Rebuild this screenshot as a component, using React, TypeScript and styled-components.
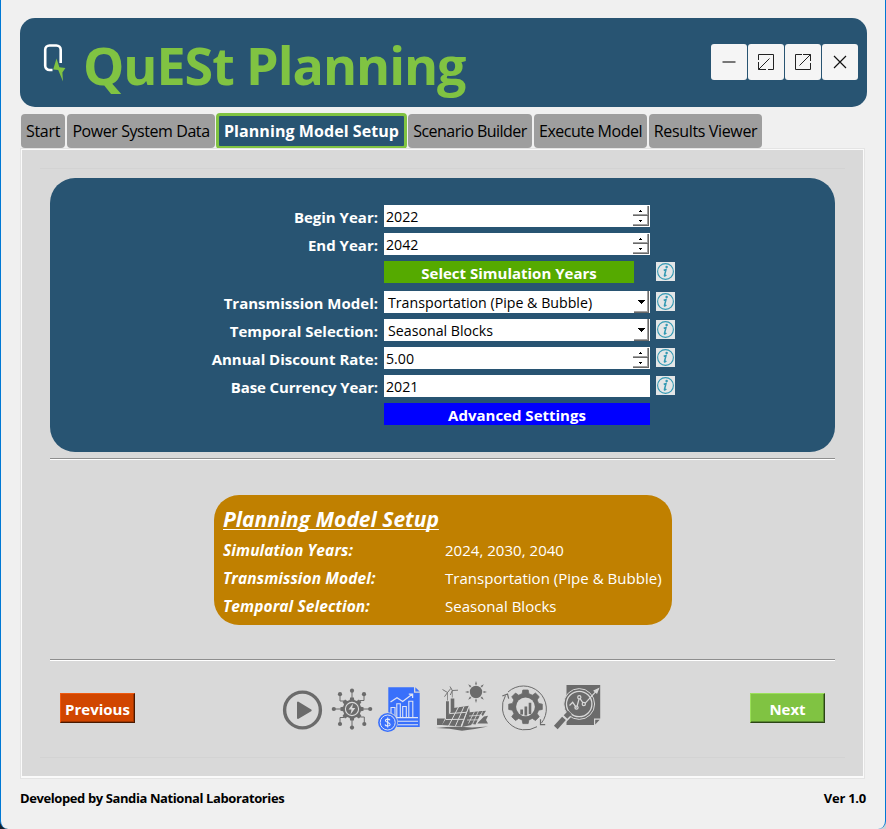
import React from 'react';
import styled, { createGlobalStyle } from 'styled-components';

const navy = '#285472';
const lime = '#80c342';
const iconGrey = '#6b6b6b';
const paper = '#d9d9d9';

const GlobalStyle = createGlobalStyle`
  * { box-sizing: border-box; }
  body {
    margin: 0;
    background: linear-gradient(90deg, #17222b 50%, #cfd3d6 50%);
    font-family: 'Open Sans', 'Noto Sans', sans-serif;
    color: #000;
  }
  button { font-family: inherit; }
`;

const Window = styled.div`
  width: 886px;
  height: 829px;
  padding: 18px 18px 0 19px;
  display: flex;
  flex-direction: column;
  background: #f0f0f0;
  border: 1px solid #0078d4;
  border-width: 0 1px 0 1px;
  border-radius: 0 0 8px 8px;
  overflow: hidden;
`;

const Header = styled.header`
  display: flex;
  align-items: center;
  flex: none;
  height: 89px;
  padding: 0 9px 0 23px;
  background: ${navy};
  border-radius: 15px;
`;

const Title = styled.h1`
  flex: 1;
  margin: 4px 0 0 16px;
  font-size: 52px;
  line-height: 70px;
  font-weight: 700;
  letter-spacing: -1.05px;
  white-space: nowrap;
  color: ${lime};
`;

const WindowControls = styled.div`
  display: flex;
  gap: 1px;
  margin-bottom: 1px;
`;

const ControlButton = styled.button`
  display: flex;
  align-items: center;
  justify-content: center;
  width: 36px;
  height: 36px;
  padding: 0;
  border: 0;
  border-radius: 3px;
  background: #f5f5f5;
`;

const TabBar = styled.nav`
  display: flex;
  align-items: center;
  flex: none;
  height: 36px;
  margin-top: 6px;
  padding-left: 1px;
`;

const Tab = styled.button<{ $width: number; $spacing: number; $active?: boolean }>`
  flex: none;
  width: ${(p) => p.$width}px;
  height: ${(p) => (p.$active ? 36 : 34)}px;
  margin-right: ${(p) => (p.$active ? 1 : 2)}px;
  margin-left: ${(p) => (p.$active ? -1 : 0)}px;
  padding: 0;
  border: ${(p) => (p.$active ? `3px solid ${lime}` : '0')};
  border-radius: 4px;
  background: ${(p) => (p.$active ? navy : '#9e9e9e')};
  color: ${(p) => (p.$active ? '#fff' : '#000')};
  font-size: 16px;
  font-weight: ${(p) => (p.$active ? 700 : 400)};
  letter-spacing: ${(p) => p.$spacing}px;
  line-height: 22px;
  white-space: nowrap;
`;

const Pane = styled.main`
  flex: none;
  width: 843px;
  height: 629px;
  margin-left: 1px;
  padding: 18px 18px 0;
  display: flex;
  flex-direction: column;
  background: ${paper};
  border: 1px solid #fafafa;
  border-bottom-width: 2px;
  outline: 1px solid #e4e4e4;
`;

const PaneBody = styled.div`
  display: flex;
  flex-direction: column;
  height: 590px;
  padding: 9px 10px 0;
  border: 1px solid #d3d3d3;
  border-width: 1px 0;
`;

const FormPanel = styled.section`
  flex: none;
  height: 274px;
  margin-bottom: 6px;
  padding: 27px 0 0 150px;
  background: ${navy};
  border-radius: 25px;
`;

const FormGrid = styled.div`
  display: grid;
  grid-template-columns: 178px 266px 19px;
  grid-template-rows: 22px 22px 24px repeat(5, 22px);
  column-gap: 6px;
  row-gap: 6px;
`;

const Label = styled.label<{ $spacing?: number }>`
  grid-column: 1;
  padding-top: 1px;
  text-align: right;
  font-size: 15px;
  font-weight: 700;
  letter-spacing: ${(p) => p.$spacing ?? 0}px;
  line-height: 22px;
  color: #fff;
  white-space: nowrap;
`;

const Field = styled.div<{ $indent?: number }>`
  grid-column: 2;
  display: flex;
  justify-content: space-between;
  height: 22px;
  padding: 0 1px 0 ${(p) => p.$indent ?? 2}px;
  background: #fff;
  font-size: 14.2px;
  line-height: 23px;
  white-space: nowrap;
`;

const ActionButton = styled.button<{ $color: string; $width: number }>`
  grid-column: 2;
  width: ${(p) => p.$width}px;
  height: 22px;
  padding: 2px 0 0;
  border: 0;
  background: ${(p) => p.$color};
  color: #fff;
  font-size: 15px;
  font-weight: 700;
  line-height: 20px;
`;

const InfoButton = styled.span`
  grid-column: 3;
  display: block;
  width: 19px;
  height: 19px;
  margin-top: 1px;
  background: #e4e6e7;
`;

const SpinColumn = styled.div`
  display: flex;
  flex-direction: column;
  padding-top: 1px;
`;

const SpinButton = styled.span`
  display: flex;
  align-items: center;
  justify-content: center;
  width: 16px;
  height: 10px;
  background: #fff;
  border: solid #696969;
  border-width: 0 1px 1px 0;
  box-shadow: inset -1px -1px #a0a0a0;
`;

const DropButton = styled.span`
  display: flex;
  align-items: center;
  justify-content: center;
  width: 15px;
  height: 22px;
  border: solid #696969;
  border-width: 0 1px 1px 0;
  box-shadow: inset -1px -1px #a0a0a0;
`;

const Rule = styled.hr`
  flex: none;
  width: 100%;
  height: 2px;
  margin: 0;
  border: 0;
  border-top: 1px solid #8e8e8e;
  background: #fff;
`;

const Summary = styled.section`
  flex: none;
  align-self: flex-start;
  width: 458px;
  height: 130px;
  margin: 35px 0 34px 164px;
  padding: 8px 9px 0;
  background: #c08000;
  border-radius: 25px;
  color: #fff;
`;

const SummaryTitle = styled.h2`
  margin: 0;
  font-size: 21px;
  font-style: italic;
  font-weight: 700;
  line-height: 33px;
  text-decoration: underline;
  text-decoration-thickness: 1px;
  text-underline-offset: 2px;
  text-decoration-skip-ink: none;
`;

const SummaryRow = styled.div`
  display: grid;
  grid-template-columns: 222px 1fr;
  font-size: 15px;
  letter-spacing: 0.03px;
  line-height: 28px;
  white-space: nowrap;
`;

const SummaryLabel = styled.span`
  font-size: 15.5px;
  font-style: italic;
  font-weight: 700;
  letter-spacing: 0.1px;
`;

const NavRow = styled.div`
  display: flex;
  flex: none;
  justify-content: space-between;
  align-items: flex-start;
  height: 74px;
  padding: 18px 10px 0;
`;

const NavButton = styled.button<{ $color: string; $light: string; $shade: string; $dark: string }>`
  width: 75px;
  height: 30px;
  margin-top: 14px;
  padding: 1px 0 0;
  border: 1px solid;
  border-color: ${(p) => `${p.$light} ${p.$dark} ${p.$dark} ${p.$light}`};
  box-shadow: inset -1px -1px ${(p) => p.$shade};
  background: ${(p) => p.$color};
  color: #fff;
  font-size: 15px;
  font-weight: 700;
  line-height: 22px;
`;

const StepIcons = styled.div`
  display: flex;
  margin-right: -1px;
`;

const Footer = styled.footer`
  display: flex;
  justify-content: space-between;
  margin-top: 9px;
  padding-right: 1px;
  font-size: 13px;
  font-weight: 700;
  line-height: 22px;
  letter-spacing: -0.4px;
`;

const FooterVersion = styled.span`
  letter-spacing: -0.25px;
`;

function gearPath(cx: number, cy: number, outer: number, inner: number, teeth = 8) {
  const points: string[] = [];
  const step = (Math.PI * 2) / teeth;
  const add = (r: number, a: number) =>
    points.push(`${(cx + r * Math.sin(a)).toFixed(2)},${(cy - r * Math.cos(a)).toFixed(2)}`);
  for (let i = 0; i < teeth; i++) {
    const a = i * step;
    add(inner, a - step * 0.32);
    add(outer, a - step * 0.2);
    add(outer, a + step * 0.2);
    add(inner, a + step * 0.32);
  }
  return `M${points.join('L')}Z`;
}

const Logo = () => (
  <svg width="24" height="42" viewBox="43 44 24 42" fill="none">
    <path d="M52.5 72h-3a4.300 4.300 0 0 1-4.300-4.300V51.800a4.300 4.300 0 0 1 4.300-4.300h6.900a4.300 4.300 0 0 1 4.300 4.300V65" stroke="#fff" strokeWidth="2.600" />
    <path d="M56.500 60.500l-3.300 11 5 .5 4.800 11.500-.6-9 3-4.500-6-.8z" fill={lime} />
  </svg>
);

const Minimize = () => (
  <svg width="14" height="2" viewBox="0 0 14 2"><path d="M.5 1h13" stroke="#777" strokeWidth="2" /></svg>
);
const Restore = () => (
  <svg width="16" height="16" viewBox="0 0 16 16" fill="none" stroke="#222">
    <path d="M.5 6V.5h15v15H10M.5 8v7.500H8M.5 15.500l11-11" />
  </svg>
);
const Maximize = () => (
  <svg width="16" height="16" viewBox="0 0 16 16" fill="none" stroke="#222">
    <path d="M7 .5H.5v15h15V9M8 .5h7.500V7M15.500.5L4.500 11.500" />
  </svg>
);
const Close = () => (
  <svg width="14" height="14" viewBox="0 0 14 14"><path d="M1 1l12 12M13 1L1 13" stroke="#111" strokeWidth="1.200" /></svg>
);

const Info = () => (
  <InfoButton>
    <svg width="19" height="19" viewBox="0 0 19 19" fill="none">
      <circle cx="9.500" cy="9.500" r="7.900" stroke="#3399b3" strokeWidth="1.100" />
      <circle cx="10.600" cy="5.100" r="1.250" fill="#3399b3" />
      <path d="M7.700 8.200l2.300-.6-1.500 5.700c-.2.900.4.900 1.900-.3" stroke="#3399b3" strokeWidth="1.500" />
    </svg>
  </InfoButton>
);

const Spinner = () => (
  <SpinColumn>
    <SpinButton><svg width="3" height="2"><path d="M1 0h1v1h1v1H0V1h1z" /></svg></SpinButton>
    <SpinButton><svg width="3" height="2"><path d="M0 0h3v1H2v1H1V1H0z" /></svg></SpinButton>
  </SpinColumn>
);

const DropArrow = () => (
  <DropButton><svg width="7" height="4"><path d="M0 0h7v1H6v1H5v1H4v1H3V3H2V2H1V1H0z" /></svg></DropButton>
);

const PlayIcon = () => (
  <svg width="47" height="56" viewBox="280 679 47 56">
    <circle cx="302.500" cy="710" r="17.900" fill="none" stroke={iconGrey} strokeWidth="3.400" />
    <path d="M298 702.500v15.500l12.700-7.700z" fill={iconGrey} stroke={iconGrey} strokeWidth="2" strokeLinejoin="round" />
  </svg>
);

const networkNodes = [
  [352, 690.7], [352, 727.600], [333.800, 709], [370.200, 709],
  [340, 694.200], [364, 694.200], [340, 724], [364.300, 724],
];

const NetworkIcon = () => (
  <svg width="49" height="56" viewBox="327 679 49 56">
    <path d="M352 691v8M352 719v8M334 709h8M362 709h8M340 694v7h4M364 694v6.500h-4M340 724v-6.500h4M364.300 724v-7h-4" fill="none" stroke={iconGrey} strokeWidth="1" />
    {networkNodes.map(([x, y]) => <circle key={`${x}-${y}`} cx={x} cy={y} r="2.100" fill={iconGrey} />)}
    <path d={gearPath(352, 709, 11.700, 9.200)} fill={iconGrey} />
    <circle cx="352" cy="709" r="6.600" fill={iconGrey} stroke={paper} strokeWidth="1.100" />
    <path d="M353 703.500l-4.500 6h3l-1 5 4.800-6.500h-3.100z" fill={paper} />
  </svg>
);

const ReportIcon = () => (
  <svg width="54" height="56" viewBox="376 679 54 56">
    <path d="M388.300 687.300H414v5.400h5.700V727h-31.400z" fill="#3970fb" />
    <path d="M415.300 687.300l4.400 4.200h-4.400z" fill="#3970fb" />
    <g fill="none" stroke="#dfe4f5" strokeWidth="1.100">
      <path d="M390.500 702l6.500-4.200 5.700 3.700 9.500-7.200M408.800 694.200h3.800v3.700" strokeWidth="1.300" />
      <path d="M391 717v-9.500h4V717M396.800 717v-13.300h3.500V717M402.700 717v-10.500h3.600V717M408.800 717v-15.800h4V717" />
      <path d="M390 717.600h28M398 721.300h20M398 724.800h20" />
    </g>
    <circle cx="387.700" cy="722.500" r="10.200" fill={paper} />
    <circle cx="387.700" cy="722.500" r="9.600" fill="#3970fb" />
    <circle cx="387.700" cy="722.500" r="7.500" fill="none" stroke="#dfe4f5" />
    <path d="M390 720.200c-.5-1.300-4.400-1.600-4.600.4-.1 2 4.700 1.500 4.700 3.800 0 2.200-4.600 2-5.100.1M387.700 717.500v10" fill="none" stroke="#e8ecf8" strokeWidth="1.100" />
  </svg>
);

const sunRays = [0, 45, 90, 135, 180, 225, 270, 315];

const SolarIcon = () => (
  <svg width="65" height="56" viewBox="430 679 65 56">
    <circle cx="476" cy="692" r="6.200" fill={iconGrey} />
    {sunRays.map((angle) => (
      <path key={angle} d="M475 684.500l1-3.500 1 3.500z" fill={iconGrey} transform={`rotate(${angle} 476 692)`} />
    ))}
    <g fill="none" stroke={iconGrey}>
      <path d="M447.500 692.500v8M452.300 690.500v7" strokeWidth=".7" />
      <path d="M447.500 692.500l-5-3M447.500 692.500l3.300-4M447.500 692.500l-3 4.200M452.300 690.500l-2.300-4M452.300 690.500l5.700-.3M452.300 690.500l-2 4.500" strokeWidth=".9" />
    </g>
    <path d="M446 701.200h2.900V719H446zM450.700 698.500h3.600V712h-3.600zM437 718.500h8l-3 6.500h-5z" fill={iconGrey} />
    <path d="M453.500 708l15.300-2.200-8 20.700-19-1.500zM469 706.500l2.500 18.500-9.500 2z" fill={iconGrey} />
    <path d="M470 712.200l12-1.200-6.500 13.500-9.800-1.500zM478 711.600l8-.8-3.200 5.200M484 716.500l4-.8-2 4.300 2 3.500h-11z" fill={iconGrey} />
    <g fill="none" stroke={paper} strokeWidth="1">
      <path d="M450 713.500l16.500-1.200M446 719.500l17.500-.2M458.500 707l-10 19M464 706.500l-9 20.500M469 706.500l-8 20" />
      <path d="M469 716l12-.8M467 720l11.800-.2M474.500 711.500l-6 12M478.500 711l-6 13.200M482.500 711.500l-6 13" strokeWidth=".8" />
    </g>
    <path d="M436 728q18-2.300 36-.6l16-.9q-12 2.600-26 4.300-12-2.500-26-2.800z" fill={iconGrey} />
  </svg>
);

const ProcessIcon = () => (
  <svg width="56" height="56" viewBox="494.500 679.500 56 56">
    <g fill="none" stroke={iconGrey} strokeWidth="1">
      <path d="M507.500 692.500A22.900 22.900 0 0 1 541 723.500M536.500 727.200A22.900 22.900 0 0 1 505 696" />
      <path d="M501.800 696.500l5.200-2 1.200 4.600M540 719.800v5.300h4.700" strokeWidth="1.200" />
    </g>
    <path d={gearPath(525, 707.300, 17.000, 13.500)} fill={iconGrey} stroke={iconGrey} strokeWidth=".8" strokeLinejoin="round" />
    <circle cx="525" cy="707.300" r="9.400" fill={paper} />
    <path d="M519.800 710h2.700v5h-2.700zM524 707h2.700v9H524zM528.200 703.200h2.600V714.500h-2.600z" fill={iconGrey} />
  </svg>
);

const AnalysisIcon = () => (
  <svg width="55" height="56" viewBox="551.500 679 55 56">
    <path d="M567 685h33.700v33.500h-6.200v6.500H567z" fill={iconGrey} />
    <path d="M595.700 719.800h4.500l-4.500 4.600z" fill={iconGrey} />
    <path d="M571 713l-14.500 15" stroke={paper} strokeWidth="6.500" />
    <circle cx="579.700" cy="704" r="15.400" fill={iconGrey} stroke={paper} strokeWidth="1" />
    <circle cx="579.700" cy="704" r="12.700" fill="none" stroke={paper} strokeWidth="1.300" />
    <path d="M570.500 712.500l-4.500 4.500M564.500 718.300l-8.200 9.200" stroke={iconGrey} strokeWidth="5" />
    <g fill="none" stroke={paper} strokeWidth="1.200">
      <path d="M570 705.500l3.200-3.200 3.800 5.500M577.500 706.500l2-7.500M580.600 698.700l3 4.500M585.500 703.300l11.500-12.500" />
      <circle cx="577" cy="707.600" r="1.600" /><circle cx="579.800" cy="697.300" r="1.600" /><circle cx="584.300" cy="704" r="1.600" />
      <path d="M594.700 690.800l4.300-2-1.700 4.300z" fill={paper} />
    </g>
  </svg>
);

const tabs = [
  { name: 'Start', width: 44, spacing: -0.3 },
  { name: 'Power System Data', width: 148, spacing: -0.43 },
  { name: 'Planning Model Setup', width: 191, spacing: 0.07, active: true },
  { name: 'Scenario Builder', width: 124, spacing: -0.52 },
  { name: 'Execute Model', width: 113, spacing: -0.5 },
  { name: 'Results Viewer', width: 113, spacing: -0.35 },
];

const summary = [
  ['Simulation Years:', '2024, 2030, 2040'],
  ['Transmission Model:', 'Transportation (Pipe & Bubble)'],
  ['Temporal Selection:', 'Seasonal Blocks'],
];

export default function App() {
  return (
    <>
      <GlobalStyle />
      <Window>
        <Header>
          <Logo />
          <Title>QuESt Planning</Title>
          <WindowControls>
            <ControlButton><Minimize /></ControlButton>
            <ControlButton><Restore /></ControlButton>
            <ControlButton><Maximize /></ControlButton>
            <ControlButton><Close /></ControlButton>
          </WindowControls>
        </Header>
        <TabBar>
          {tabs.map((t) => (
            <Tab key={t.name} $width={t.width} $spacing={t.spacing} $active={t.active}>{t.name}</Tab>
          ))}
        </TabBar>
        <Pane>
          <PaneBody>
            <FormPanel>
              <FormGrid>
                <Label>Begin Year:</Label><Field>2022<Spinner /></Field>
                <Label>End Year:</Label><Field>2042<Spinner /></Field>
                <ActionButton $color="#55aa00" $width={250}>Select Simulation Years</ActionButton><Info />
                <Label>Transmission Model:</Label><Field $indent={4}>Transportation (Pipe &amp; Bubble)<DropArrow /></Field><Info />
                <Label>Temporal Selection:</Label><Field $indent={4}>Seasonal Blocks<DropArrow /></Field><Info />
                <Label>Annual Discount Rate:</Label><Field>5.00<Spinner /></Field><Info />
                <Label $spacing={-0.13}>Base Currency Year:</Label><Field>2021</Field><Info />
                <ActionButton $color="#0000ff" $width={266}>Advanced Settings</ActionButton>
              </FormGrid>
            </FormPanel>
            <Rule />
            <Summary>
              <SummaryTitle>Planning Model Setup</SummaryTitle>
              {summary.map(([label, value]) => (
                <SummaryRow key={label}><SummaryLabel>{label}</SummaryLabel><span>{value}</span></SummaryRow>
              ))}
            </Summary>
            <Rule />
            <NavRow>
              <NavButton $color="#d14600" $light="#f05a10" $shade="#a03500" $dark="#4a1900">Previous</NavButton>
              <StepIcons>
                <PlayIcon /><NetworkIcon /><ReportIcon /><SolarIcon /><ProcessIcon /><AnalysisIcon />
              </StepIcons>
              <NavButton $color="#80c342" $light="#9be05a" $shade="#5a8a2e" $dark="#2c4516">Next</NavButton>
            </NavRow>
          </PaneBody>
        </Pane>
        <Footer>
          <span>Developed by Sandia National Laboratories</span>
          <FooterVersion>Ver 1.0</FooterVersion>
        </Footer>
      </Window>
    </>
  );
}
